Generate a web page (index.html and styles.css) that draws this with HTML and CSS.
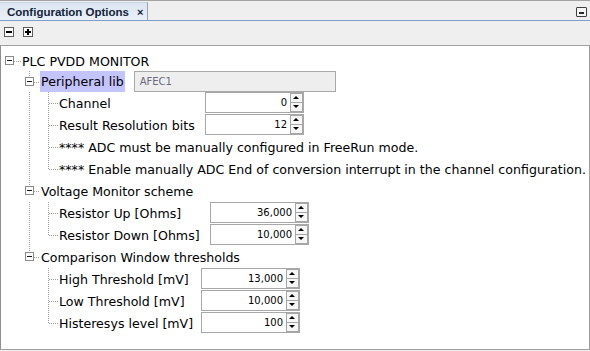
FILE: index.html
```html
<!DOCTYPE html>
<html>
<head>
<meta charset="utf-8">
<link rel="stylesheet" href="styles.css">
</head>
<body>
<div class="window">
  <div class="tabbar">
    <div class="tab">
      <span class="tab-title">Configuration Options</span>
      <span class="tab-close">×</span>
    </div>
    <div class="tabbar-fill"></div>
    <span class="min-btn"></span>
  </div>
  <div class="toolbar">
    <span class="tool-btn minus"></span>
    <span class="tool-btn plus"></span>
  </div>
  <div class="panel">
    <div class="tree">
      <!-- level 0 -->
      <div class="row r20">
        <span class="cell c0 node"><span class="box"></span></span>
        <span class="label l0">PLC PVDD MONITOR</span>
      </div>

      <!-- Peripheral lib -->
      <div class="row r21">
        <span class="cell c0"></span>
        <span class="cell c1 node up down"><span class="box"></span></span>
        <span class="label sel">Peripheral lib</span>
        <span class="combo">AFEC1</span>
      </div>
      <div class="fgrid g-adc">
        <span class="ind"><span class="cell c0"></span><span class="cell c1 pipe"></span><span class="cell c2 tee"></span></span>
        <span class="label l2">Channel</span>
        <span class="spin"><span class="val">0</span><span class="arrows"><span class="ar up"></span><span class="ar dn"></span></span></span>

        <span class="ind"><span class="cell c0"></span><span class="cell c1 pipe"></span><span class="cell c2 tee"></span></span>
        <span class="label l2">Result Resolution bits</span>
        <span class="spin"><span class="val">12</span><span class="arrows"><span class="ar up"></span><span class="ar dn"></span></span></span>
      </div>
      <div class="row">
        <span class="cell c0"></span><span class="cell c1 pipe"></span><span class="cell c2 tee"></span>
        <span class="label l2">**** ADC must be manually configured in FreeRun mode.</span>
      </div>
      <div class="row">
        <span class="cell c0"></span><span class="cell c1 pipe"></span><span class="cell c2 elbow"></span>
        <span class="label l2">**** Enable manually ADC End of conversion interrupt in the channel configuration.</span>
      </div>

      <!-- Voltage Monitor scheme -->
      <div class="row">
        <span class="cell c0"></span>
        <span class="cell c1 node up down"><span class="box"></span></span>
        <span class="label l1">Voltage Monitor scheme</span>
      </div>
      <div class="fgrid g-res">
        <span class="ind"><span class="cell c0"></span><span class="cell c1 pipe"></span><span class="cell c2 tee"></span></span>
        <span class="label l2">Resistor Up [Ohms]</span>
        <span class="spin"><span class="val">36,000</span><span class="arrows"><span class="ar up"></span><span class="ar dn"></span></span></span>

        <span class="ind"><span class="cell c0"></span><span class="cell c1 pipe"></span><span class="cell c2 elbow"></span></span>
        <span class="label l2">Resistor Down [Ohms]</span>
        <span class="spin"><span class="val">10,000</span><span class="arrows"><span class="ar up"></span><span class="ar dn"></span></span></span>
      </div>

      <!-- Comparison Window thresholds -->
      <div class="row">
        <span class="cell c0"></span>
        <span class="cell c1 node up"><span class="box"></span></span>
        <span class="label l1">Comparison Window thresholds</span>
      </div>
      <div class="fgrid g-cmp">
        <span class="ind"><span class="cell c0"></span><span class="cell c1"></span><span class="cell c2 tee"></span></span>
        <span class="label l2">High Threshold [mV]</span>
        <span class="spin"><span class="val">13,000</span><span class="arrows"><span class="ar up"></span><span class="ar dn"></span></span></span>

        <span class="ind"><span class="cell c0"></span><span class="cell c1"></span><span class="cell c2 tee"></span></span>
        <span class="label l2">Low Threshold [mV]</span>
        <span class="spin"><span class="val">10,000</span><span class="arrows"><span class="ar up"></span><span class="ar dn"></span></span></span>

        <span class="ind"><span class="cell c0"></span><span class="cell c1"></span><span class="cell c2 elbow"></span></span>
        <span class="label l2">Histeresys level [mV]</span>
        <span class="spin"><span class="val">100</span><span class="arrows"><span class="ar up"></span><span class="ar dn"></span></span></span>
      </div>
    </div>
  </div>
</div>
</body>
</html>
```

FILE: styles.css
```css
* { box-sizing: border-box; }
html, body { margin: 0; padding: 0; }
body {
  width: 590px;
  height: 351px;
  overflow: hidden;
  background: #efefef;
  font-family: "DejaVu Sans", sans-serif;
  font-size: 12.6px;
  color: #000;
}
.window {
  height: 351px;
  display: flex;
  flex-direction: column;
  border-top: 1px solid #a3a3a3;
}

/* tab bar */
.tabbar {
  height: 20px;
  flex: none;
  display: flex;
  align-items: flex-end;
  border-bottom: 1px solid #7d9ec6;
  position: relative;
}
.tab {
  width: 148px;
  height: 18px;
  display: flex;
  align-items: center;
  padding-left: 7px;
  background: linear-gradient(#dbe5f1, #eaf0f7);
  border-top: 1px solid #c9d5e3;
  border-right: 1px solid #9aa3ad;
}
.tab-title {
  font-family: "Liberation Sans", Arial, sans-serif;
  font-weight: bold;
  font-size: 11.5px;
  color: #15243a;
}
.tab-close {
  margin-left: 8px;
  font-family: "Liberation Sans", Arial, sans-serif;
  font-weight: bold;
  font-size: 11px;
  color: #15243a;
}
.tabbar-fill { flex: 1; }
.min-btn {
  position: absolute;
  right: 3px;
  top: 6px;
  width: 11px;
  height: 10px;
  border: 1px solid #3f3f3f;
  border-radius: 1px;
  background: #f4f4f4;
}
.min-btn::after {
  content: "";
  position: absolute;
  left: 2px;
  top: 4px;
  width: 5px;
  height: 2px;
  background: #2a2a2a;
}

/* toolbar */
.toolbar {
  height: 24px;
  flex: none;
  display: flex;
  align-items: flex-start;
  gap: 9px;
  padding: 6px 0 0 4px;
}
.tool-btn {
  width: 10px;
  height: 10px;
  border: 1px solid #5c5c5c;
  background: #fff;
  position: relative;
}
.tool-btn::before {
  content: "";
  position: absolute;
  left: 1px;
  top: 3px;
  width: 6px;
  height: 2px;
  background: #000;
}
.tool-btn.plus::after {
  content: "";
  position: absolute;
  left: 3px;
  top: 1px;
  width: 2px;
  height: 6px;
  background: #000;
}

/* panel */
.panel {
  height: 305px;
  flex: none;
  background: #fff;
  border: 1px solid #a0a0a0;
  border-left: 1px solid #8f8f8f;
}
.tree { padding-top: 5px; }

.row {
  height: 22px;
  display: flex;
  align-items: stretch;
}
.row.r20 { height: 20px; }
.row.r21 { height: 21px; }

.fgrid {
  display: grid;
  grid-auto-rows: 22px;
}
.g-adc { grid-template-columns: 57px 147px 99px; }
.g-res { grid-template-columns: 57px 152px 99px; }
.g-cmp { grid-template-columns: 57px 143px 99px; }
.ind { display: flex; }

/* tree cells */
.cell {
  position: relative;
  flex: none;
  height: 100%;
}
.ind .cell { height: 22px; }
.c0 { width: 20px; }
.c1 { width: 19px; }
.c2 { width: 18px; }

.pipe::before, .tee::before, .elbow::before,
.node.up::before, .node.down::before {
  content: "";
  position: absolute;
  left: 8px;
  width: 1px;
  background: repeating-linear-gradient(to bottom, #a0a0a0 0 1px, transparent 1px 2px);
}
.pipe::before, .tee::before { top: 0; bottom: 0; }
.elbow::before { top: 0; height: 11px; }
.node.up::before { top: 0; height: 50%; }
.node.down::before { top: 0; bottom: 0; }

.tee::after, .elbow::after, .node::after {
  content: "";
  position: absolute;
  left: 9px;
  right: 0;
  top: 11px;
  height: 1px;
  background: repeating-linear-gradient(to right, #a0a0a0 0 1px, transparent 1px 2px);
}
.node::after { left: 13px; top: 50%; }

.box {
  position: absolute;
  z-index: 1;
  left: 4px;
  top: 50%;
  margin-top: -5px;
  width: 9px;
  height: 9px;
  border: 1px solid #8a8a8a;
  background: #fff;
}
.box::after {
  content: "";
  position: absolute;
  left: 1px;
  top: 3px;
  width: 5px;
  height: 1px;
  background: #1a1a1a;
}

/* labels */
.label {
  white-space: nowrap;
  display: flex;
  align-items: center;
  height: 22px;
}
.row .label { height: auto; }
.l0 { margin-left: 1px; }
.l1 { padding-left: 1px; }
.l2 { padding-left: 1px; }
.sel {
  background: #c4c4fc;
  padding: 0 1px;
  min-width: 82px;
  height: 21px;
}
.combo {
  margin-left: 9px;
  width: 202px;
  height: 21px;
  border: 1px solid #a9a9a9;
  background: #eeeeee;
  display: flex;
  align-items: center;
  padding-left: 5px;
  font-size: 10px;
  color: #6a6a80;
}

/* spinners */
.spin {
  width: 99px;
  height: 21px;
  border: 1px solid #a8a8a8;
  background: #fff;
  display: flex;
  align-items: center;
  justify-content: flex-end;
}
.val {
  font-size: 10px;
  padding-right: 3px;
  color: #000;
}
.arrows {
  width: 13px;
  height: 19px;
  display: flex;
  flex-direction: column;
}
.ar {
  flex: 1;
  position: relative;
  border: 1px solid #a6a6a6;
  background: #f6f6f6;
}
.ar.dn { border-top: none; }
.ar::after {
  content: "";
  position: absolute;
  left: 2px;
  width: 0;
  height: 0;
  border-left: 3px solid transparent;
  border-right: 3px solid transparent;
}
.ar.up::after { top: 2px; border-bottom: 3px solid #000; }
.ar.dn::after { top: 2px; border-top: 3px solid #000; }
```
